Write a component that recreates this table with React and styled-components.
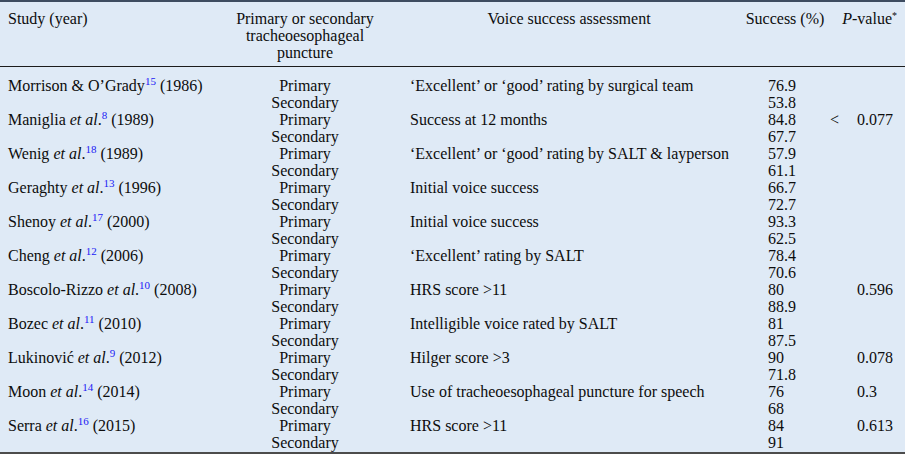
import React from "react";
import styled, { createGlobalStyle } from "styled-components";

const GlobalStyle = createGlobalStyle`
  html, body {
    margin: 0;
    padding: 0;
    background: #ffffff;
  }
  body {
    font-family: "Liberation Serif", "Times New Roman", serif;
    color: #0d0d0d;
  }
`;

const COLS = "228px 154px 358px 90px 75px";

const Table = styled.div`
  width: 905px;
  background: #dfeaf6;
  border-top: 2px solid #3e4c60;
  border-bottom: 2px solid #4c4c4c;
  box-shadow: 0 2px 0 #a7a7a7;
  font-size: 16px;
  line-height: 17px;
`;

const HeaderRow = styled.div`
  display: grid;
  grid-template-columns: ${COLS};
  padding: 8px 0 5px;
  border-bottom: 1px solid #1c1c1c;
`;

const Body = styled.div`
  padding: 10px 0 1px;
`;

const Row = styled.div`
  display: grid;
  grid-template-columns: ${COLS};
  grid-auto-rows: 17px;
`;

const Cell = styled.div`
  text-align: ${(p) => p.$align || "left"};
  padding-left: ${(p) => p.$pl || 0}px;
  padding-right: ${(p) => p.$pr || 0}px;
  white-space: nowrap;
`;

const StudyCell = styled(Cell)`
  padding-left: 8px;
`;

const TypeCell = styled.div`
  text-align: center;
  white-space: nowrap;
`;

const Ref = styled.sup`
  color: #2020f5;
  font-size: 11px;
  line-height: 0;
  vertical-align: 0;
  position: relative;
  top: -6px;
`;

const Star = styled.sup`
  font-size: 10px;
  line-height: 0;
  vertical-align: 0;
  position: relative;
  top: -5px;
`;

const PCell = styled.div`
  display: grid;
  grid-template-columns: 27px auto;
  white-space: nowrap;
`;

const Prefix = styled.span`
  text-align: left;
`;

const data = [
  { a: "Morrison & O\u2019Grady", etal: false, ref: "15", y: "1986", m: "\u2018Excellent\u2019 or \u2018good\u2019 rating by surgical team", s: ["76.9", "53.8"], p: "" },
  { a: "Maniglia", etal: true, ref: "8", y: "1989", m: "Success at 12 months", s: ["84.8", "67.7"], p: "0.077", lt: true },
  { a: "Wenig", etal: true, ref: "18", y: "1989", m: "\u2018Excellent\u2019 or \u2018good\u2019 rating by SALT & layperson", s: ["57.9", "61.1"], p: "" },
  { a: "Geraghty", etal: true, ref: "13", y: "1996", m: "Initial voice success", s: ["66.7", "72.7"], p: "" },
  { a: "Shenoy", etal: true, ref: "17", y: "2000", m: "Initial voice success", s: ["93.3", "62.5"], p: "" },
  { a: "Cheng", etal: true, ref: "12", y: "2006", m: "\u2018Excellent\u2019 rating by SALT", s: ["78.4", "70.6"], p: "" },
  { a: "Boscolo-Rizzo", etal: true, ref: "10", y: "2008", m: "HRS score >11", s: ["80", "88.9"], p: "0.596" },
  { a: "Bozec", etal: true, ref: "11", y: "2010", m: "Intelligible voice rated by SALT", s: ["81", "87.5"], p: "" },
  { a: "Lukinovi\u0107", etal: true, ref: "9", y: "2012", m: "Hilger score >3", s: ["90", "71.8"], p: "0.078" },
  { a: "Moon", etal: true, ref: "14", y: "2014", m: "Use of tracheoesophageal puncture for speech", s: ["76", "68"], p: "0.3" },
  { a: "Serra", etal: true, ref: "16", y: "2015", m: "HRS score >11", s: ["84", "91"], p: "0.613" },
];

export default function App() {
  return (
    <>
      <GlobalStyle />
      <Table>
        <HeaderRow>
          <StudyCell>Study (year)</StudyCell>
          <TypeCell>
            Primary or secondary
            <br />
            tracheoesophageal
            <br />
            puncture
          </TypeCell>
          <Cell $align="center" $pl={28} $pr={12}>Voice success assessment</Cell>
          <Cell $align="center">Success (%)</Cell>
          <Cell $align="right" $pr={8}>
            <i>P</i>-value<Star>*</Star>
          </Cell>
        </HeaderRow>
        <Body>
          {data.map((d) => (
            <Row key={d.a}>
              <StudyCell>
                {d.a}
                {d.etal && (
                  <>
                    {" "}
                    <i>et al</i>.
                  </>
                )}
                <Ref>{d.ref}</Ref> ({d.y})
              </StudyCell>
              <TypeCell>Primary</TypeCell>
              <Cell $pl={28}>{d.m}</Cell>
              <Cell $pl={28}>{d.s[0]}</Cell>
              <PCell>
                <Prefix>{d.lt ? "<" : ""}</Prefix>
                <span>{d.p}</span>
              </PCell>
              <StudyCell />
              <TypeCell>Secondary</TypeCell>
              <Cell />
              <Cell $pl={28}>{d.s[1]}</Cell>
              <Cell />
            </Row>
          ))}
        </Body>
      </Table>
    </>
  );
}
